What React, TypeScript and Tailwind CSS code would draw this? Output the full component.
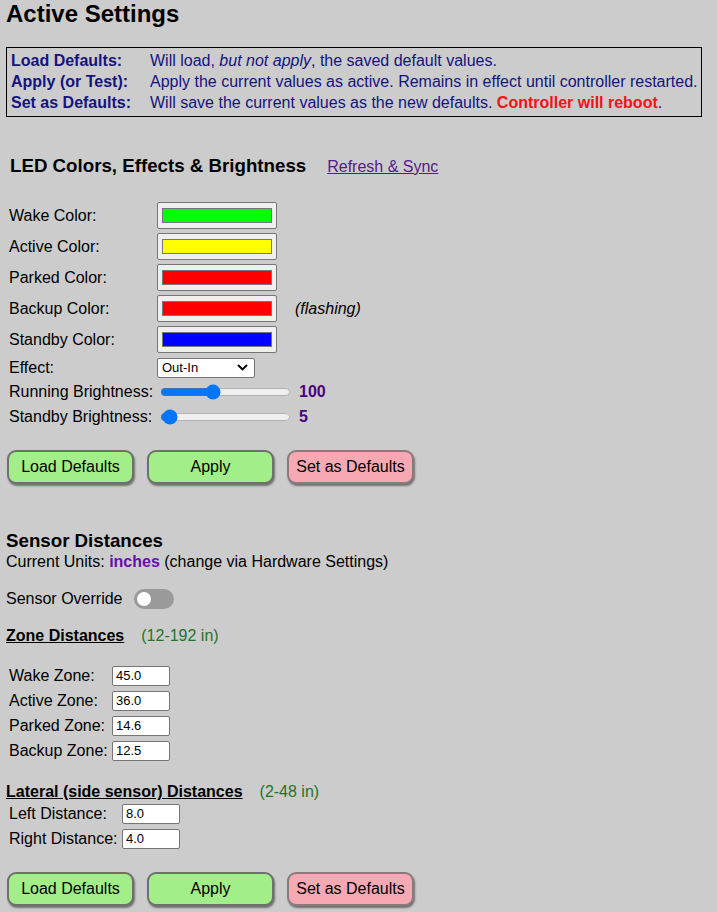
import { useState } from 'react';

const NAVY = 'text-[#14147f]';

function ColorRow({ label, color, note }: { label: string; color: string; note?: string }) {
  return (
    <div className="flex h-[31px] items-center">
      <span className="w-[148px] shrink-0">{label}</span>
      <div className="flex h-[27px] w-[120px] items-center justify-center rounded-[2px] border border-[#767676] bg-[#efefef]">
        <div className="h-[15px] w-[110px] border border-[#777777]" style={{ background: color }} />
      </div>
      {note && <span className="ml-[18px] italic">{note}</span>}
    </div>
  );
}

function Slider({ label, value, max, h }: { label: string; value: number; max: number; h: string }) {
  const [v, setV] = useState(value);
  return (
    <div className={`flex items-center ${h}`}>
      <span className="w-[148px] shrink-0">{label}</span>
      <input
        type="range"
        min={0}
        max={max}
        value={v}
        onChange={(e) => setV(Number(e.target.value))}
        className="m-0 ml-[3px] w-[131px] accent-[#0075ff]"
      />
      <span className="ml-[8px] font-bold text-[#4b0082]">{v}</span>
    </div>
  );
}

function NumRow({ label, value, labelW }: { label: string; value: string; labelW: string }) {
  return (
    <div className="flex h-[25px] items-center">
      <span className={`${labelW} shrink-0`}>{label}</span>
      <input
        type="text"
        defaultValue={value}
        className="h-[20px] w-[58px] rounded-[2px] border border-[#767676] bg-white px-[3px] text-[13px] outline-none"
      />
    </div>
  );
}

function ActionButtons() {
  return (
    <div className="flex gap-[13px] pl-[1px]">
      <button className="h-[34px] w-[127px] rounded-[9px] border-2 border-[#6f6f6f] bg-[#a2ee88] shadow-[1px_2px_2px_rgba(0,0,0,0.45)]">
        Load Defaults
      </button>
      <button className="h-[34px] w-[127px] rounded-[9px] border-2 border-[#6f6f6f] bg-[#a2ee88] shadow-[1px_2px_2px_rgba(0,0,0,0.45)]">
        Apply
      </button>
      <button className="h-[34px] w-[127px] rounded-[9px] border-2 border-[#8a7a7c] bg-[#f7a9b3] shadow-[1px_2px_2px_rgba(0,0,0,0.45)]">
        Set as Defaults
      </button>
    </div>
  );
}

export default function App() {
  const [override, setOverride] = useState(false);

  return (
    <div className="min-h-[912px] bg-[#cccccc] px-[6px] pb-[10px] font-['Liberation_Sans',Arial,sans-serif] text-[16px] text-black">
      {/* Title */}
      <h2 className="text-[24px] font-bold leading-[28px]">Active Settings</h2>

      {/* Help box */}
      <div className={`mt-[19px] w-[696px] border border-black pt-[2px] pb-[3px] pl-[4px] leading-[21px] ${NAVY}`}>
        <div className="flex">
          <span className="w-[139px] shrink-0 font-bold">Load Defaults:</span>
          <span>
            Will load, <i>but not apply</i>, the saved default values.
          </span>
        </div>
        <div className="flex">
          <span className="w-[139px] shrink-0 font-bold">Apply (or Test):</span>
          <span>Apply the current values as active. Remains in effect until controller restarted.</span>
        </div>
        <div className="flex">
          <span className="w-[139px] shrink-0 font-bold">Set as Defaults:</span>
          <span>
            Will save the current values as the new defaults.{' '}
            <b className="text-[#f01414]">Controller will reboot</b>.
          </span>
        </div>
      </div>

      {/* LED section */}
      <div className="mt-[38px] flex items-baseline pl-[4px] leading-[22px]">
        <h3 className="text-[18.72px] font-bold">LED Colors, Effects &amp; Brightness</h3>
        <a href="#" className="ml-[21px] text-[#551a8b] underline">
          Refresh &amp; Sync
        </a>
      </div>

      <div className="mt-[22px] pl-[3px]">
        <ColorRow label="Wake Color:" color="#00ff00" />
        <ColorRow label="Active Color:" color="#ffff00" />
        <ColorRow label="Parked Color:" color="#ff0000" />
        <ColorRow label="Backup Color:" color="#ff0000" note="(flashing)" />
        <ColorRow label="Standby Color:" color="#0000ff" />

        <div className="flex h-[25px] items-center">
          <span className="w-[148px] shrink-0">Effect:</span>
          <div className="flex h-[20px] w-[98px] items-center justify-between rounded-[2px] border border-[#767676] bg-white pl-[4px] pr-[6px] text-[13px]">
            <span>Out-In</span>
            <svg width="11" height="7" viewBox="0 0 11 7" fill="none">
              <path d="M1 1l4.5 4.5L10 1" stroke="black" strokeWidth="1.8" />
            </svg>
          </div>
        </div>
        <Slider label="Running Brightness:" value={100} max={255} h="h-[24px]" />
        <Slider label="Standby Brightness:" value={5} max={255} h="h-[26px]" />
      </div>

      <div className="mt-[20px]">
        <ActionButtons />
      </div>

      {/* Sensor section */}
      <h3 className="mt-[46px] text-[18.72px] font-bold leading-[22px]">Sensor Distances</h3>
      <p className="leading-[19px]">
        Current Units: <b className="text-[#6a0dad]">inches</b> (change via Hardware Settings)
      </p>

      <div className="mt-[18px] flex h-[20px] items-center">
        <span>Sensor Override</span>
        <button
          onClick={() => setOverride(!override)}
          className={`ml-[11px] flex h-[20px] w-[40px] items-center rounded-full px-[3px] ${
            override ? 'justify-end bg-[#2196f3]' : 'justify-start bg-[#9a9a9a]'
          }`}
        >
          <span className="h-[14px] w-[14px] rounded-full bg-white" />
        </button>
      </div>

      <div className="mt-[18px] flex items-baseline leading-[18px]">
        <span className="font-bold underline">Zone Distances</span>
        <span className="ml-[17px] text-[#267326]">(12-192 in)</span>
      </div>

      <div className="mt-[18px] pl-[3px]">
        <NumRow label="Wake Zone:" value="45.0" labelW="w-[103px]" />
        <NumRow label="Active Zone:" value="36.0" labelW="w-[103px]" />
        <NumRow label="Parked Zone:" value="14.6" labelW="w-[103px]" />
        <NumRow label="Backup Zone:" value="12.5" labelW="w-[103px]" />
      </div>

      <div className="mt-[20px] flex items-baseline leading-[18px]">
        <span className="font-bold underline">Lateral (side sensor) Distances</span>
        <span className="ml-[17px] text-[#267326]">(2-48 in)</span>
      </div>

      <div className="pl-[3px]">
        <NumRow label="Left Distance:" value="8.0" labelW="w-[113px]" />
        <NumRow label="Right Distance:" value="4.0" labelW="w-[113px]" />
      </div>

      <div className="mt-[21px]">
        <ActionButtons />
      </div>
    </div>
  );
}
